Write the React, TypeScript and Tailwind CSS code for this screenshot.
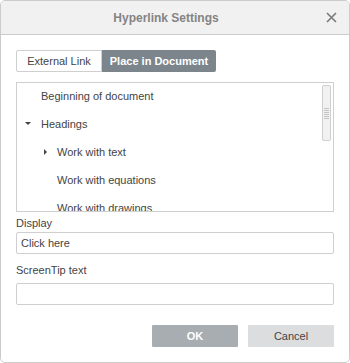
export default function App() {
  return (
    <div className="w-[350px] h-[363px] bg-white" style={{ fontFamily: '"Liberation Sans", Arial, sans-serif' }}>
      <div className="h-full border border-[#cbcbcb] rounded-[5px] overflow-hidden flex flex-col">
        {/* Header */}
        <div className="relative h-[34px] shrink-0 bg-[#f1f1f1] border-b border-[#cbcbcb] flex items-center justify-center pr-[18px]">
          <span className="text-[12px] font-bold text-[#848484]">Hyperlink Settings</span>
          <svg className="absolute right-[12px] top-[11px]" width="11" height="11" viewBox="0 0 11 11">
            <path d="M1 1L10 10M10 1L1 10" stroke="#7a7a7a" strokeWidth="1.6" />
          </svg>
        </div>

        <div className="flex flex-col px-[15px] pt-[15px] text-[11px] text-[#444]">
          {/* Tabs */}
          <div className="flex h-[22px]">
            <button className="w-[86px] border border-[#cfcfcf] rounded-l-[2px] bg-white text-[#444]">External Link</button>
            <button className="w-[114px] rounded-r-[2px] bg-[#7d858c] text-white font-bold">Place in Document</button>
          </div>

          {/* Tree */}
          <div className="relative mt-[10px] h-[130px] border border-[#cfcfcf] overflow-hidden">
            <div className="flex flex-col -mt-[1px]">
              <div className="h-[28px] flex items-center pl-[24px]">Beginning of document</div>
              <div className="h-[28px] flex items-center pl-[8px]">
                <span className="w-[16px] flex">
                  <svg width="6" height="4" viewBox="0 0 6 4"><path d="M0 0H6L3 3Z" fill="#444" /></svg>
                </span>
                Headings
              </div>
              <div className="h-[28px] flex items-center pl-[24px]">
                <span className="w-[16px] flex pl-[3px]">
                  <svg width="4" height="6" viewBox="0 0 4 6"><path d="M0 0V6L3 3Z" fill="#444" /></svg>
                </span>
                Work with text
              </div>
              <div className="h-[28px] flex items-center pl-[40px]">Work with equations</div>
              <div className="h-[28px] flex items-center pl-[40px]">Work with drawings</div>
            </div>
            {/* scrollbar */}
            <div className="absolute right-[2px] top-[2px] w-[9px] h-[56px] bg-[#f1f1f1] border border-[#cfcfcf] rounded-[2px] flex flex-col items-center justify-center gap-[1px]">
              <div className="w-[5px] h-px bg-[#c4c4c4]" />
              <div className="w-[5px] h-px bg-[#c4c4c4]" />
              <div className="w-[5px] h-px bg-[#c4c4c4]" />
              <div className="w-[5px] h-px bg-[#c4c4c4]" />
              <div className="w-[5px] h-px bg-[#c4c4c4]" />
              <div className="w-[5px] h-px bg-[#c4c4c4]" />
            </div>
          </div>

          {/* Display */}
          <label className="mt-[4px] leading-[14px]">Display</label>
          <div className="mt-[2px] h-[22px] border border-[#cfcfcf] rounded-[2px] flex items-center px-[4px] text-[#444]">Click here</div>

          <label className="mt-[9px] leading-[14px]">ScreenTip text</label>
          <div className="mt-[6px] h-[22px] border border-[#cfcfcf] rounded-[2px]" />

          {/* Buttons */}
          <div className="mt-[20px] flex justify-end gap-[10px]">
            <button className="w-[86px] h-[22px] bg-[#a8adb1] text-white font-bold rounded-[1px]">OK</button>
            <button className="w-[86px] h-[22px] bg-[#dcdddf] text-[#444] rounded-[1px]">Cancel</button>
          </div>
        </div>
      </div>
    </div>
  );
}
